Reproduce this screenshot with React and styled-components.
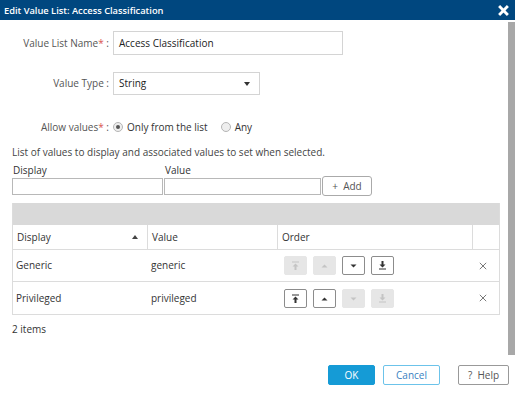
import React from 'react';
import styled, { createGlobalStyle } from 'styled-components';

const GlobalStyle = createGlobalStyle`
  html, body {
    margin: 0;
    padding: 0;
    background: #fff;
  }
  body {
    font-family: 'Open Sans', 'Liberation Sans', sans-serif;
    font-size: 10px;
    line-height: 13px;
    color: #333;
  }
`;

const Dialog = styled.div`
  width: 515px;
  height: 393px;
  display: flex;
  flex-direction: column;
  overflow: hidden;
  background: #fff;
`;

const TitleBar = styled.div`
  height: 20px;
  flex: none;
  background: #00477f;
  color: #fff;
  display: flex;
  align-items: center;
  justify-content: space-between;
  padding: 0 6px 0 4px;
  font-size: 9.3px;
  font-weight: 600;
`;

const ScrollArea = styled.div`
  height: 335px;
  flex: none;
  display: flex;
`;

const Content = styled.div`
  flex: 1;
  padding: 11px 8px 0 12px;
  display: flex;
  flex-direction: column;
`;

const ScrollTrack = styled.div`
  width: 7px;
  flex: none;
  margin-right: 2px;
  padding-top: 2px;
  display: flex;
`;

const ScrollThumb = styled.div`
  flex: 1;
  background: #a8a8a8;
`;

const FormRow = styled.div`
  display: grid;
  grid-template-columns: 97px auto;
  column-gap: 4px;
  align-items: center;
  margin-top: ${(p) => p.top || 0}px;
`;

const Label = styled.div`
  text-align: right;
  color: #555;
  white-space: nowrap;
`;

const Req = styled.span`
  color: #d9534f;
`;

const TextBox = styled.div`
  box-sizing: border-box;
  width: ${(p) => p.w}px;
  height: ${(p) => p.h || 24}px;
  border: 1px solid #d4d4d4;
  display: flex;
  align-items: center;
  padding: 0 9px 0 5px;
  justify-content: space-between;
  color: #222;
`;

const Caret = styled.span`
  width: 0;
  height: 0;
  border-left: 3px solid transparent;
  border-right: 3px solid transparent;
  border-top: 4px solid #333;
`;

const RadioGroup = styled.div`
  display: flex;
  align-items: center;
  height: 14px;
`;

const RadioOption = styled.label`
  display: flex;
  align-items: center;
  gap: 4px;
  margin-right: 13px;
  color: #333;
`;

const RadioDot = styled.span`
  box-sizing: border-box;
  width: 10px;
  height: 10px;
  border-radius: 50%;
  border: 1px solid #b5b5b5;
  background: #eee;
  display: flex;
  align-items: center;
  justify-content: center;
  &::after {
    content: '';
    width: 4px;
    height: 4px;
    border-radius: 50%;
    background: ${(p) => (p.checked ? '#555' : 'transparent')};
  }
`;

const Hint = styled.div`
  margin-top: 12px;
  color: #444;
`;

const EntryGrid = styled.div`
  display: grid;
  grid-template-columns: 152px 158px auto;
  margin-top: 5px;
  align-items: end;
`;

const EntryLabel = styled.div`
  color: #333;
  padding-left: 1px;
`;

const EntryInput = styled.div`
  box-sizing: border-box;
  width: ${(p) => p.w}px;
  height: 17px;
  border: 1px solid #b8b8b8;
  margin-top: 1px;
`;

const AddButton = styled.button`
  box-sizing: border-box;
  width: 50px;
  height: 20px;
  margin-bottom: -1px;
  border: 1px solid #aaa;
  border-radius: 3px;
  background: #fff;
  color: #555;
  font-family: inherit;
  font-size: 10px;
  padding: 0;
  white-space: pre;
`;

const Table = styled.div`
  margin-top: 8px;
  width: 486px;
  border: 1px solid #dcdcdc;
  border-top: none;
`;

const TableBand = styled.div`
  height: 22px;
  background: #d9d9d9;
`;

const Row = styled.div`
  display: grid;
  grid-template-columns: 135px 130px 195px 1fr;
  height: ${(p) => p.h}px;
  border-bottom: ${(p) => (p.last ? 'none' : '1px solid #dcdcdc')};
  box-sizing: border-box;
`;

const HeadCell = styled.div`
  display: flex;
  align-items: center;
  justify-content: space-between;
  padding: 0 9px 0 4px;
  color: #333;
  border-right: ${(p) => (p.end ? 'none' : '1px solid #dcdcdc')};
`;

const Cell = styled.div`
  display: flex;
  align-items: center;
  padding-left: ${(p) => p.pl ?? 3}px;
  gap: 6px;
  color: #333;
`;

const SortUp = styled.span`
  width: 0;
  height: 0;
  border-left: 3px solid transparent;
  border-right: 3px solid transparent;
  border-bottom: 4px solid #444;
`;

const OrderBtn = styled.div`
  box-sizing: border-box;
  width: 23px;
  height: 19px;
  border-radius: 2px;
  display: flex;
  align-items: center;
  justify-content: center;
  border: 1px solid ${(p) => (p.off ? '#e6e6e6' : '#8c8c8c')};
  background: ${(p) => (p.off ? '#e6e6e6' : '#fff')};
  color: ${(p) => (p.off ? '#c4c4c4' : '#333')};
`;

const Count = styled.div`
  margin-top: 8px;
  color: #333;
`;

const Footer = styled.div`
  flex: 1;
  display: flex;
  align-items: flex-start;
  padding: 10px 6px 0 0;
  justify-content: flex-end;
`;

const FootButton = styled.button`
  box-sizing: border-box;
  width: ${(p) => p.w}px;
  height: 20px;
  margin-left: ${(p) => p.ml}px;
  border-radius: 2px;
  font-family: inherit;
  font-size: 10px;
  padding: 0;
  white-space: pre;
  background: ${(p) => (p.primary ? '#159bd6' : '#fff')};
  color: ${(p) => (p.primary ? '#fff' : p.color)};
  border: 1px solid ${(p) => (p.primary ? '#159bd6' : p.border)};
`;

const Glyph = ({ kind }) => {
  const paths = {
    top: (
      <>
        <rect x="1" y="0.5" width="7" height="1" fill="currentColor" />
        <path d="M4.5 2.5 L1.5 5.5 H3.5 V9 H5.5 V5.5 H7.5 Z" fill="currentColor" />
      </>
    ),
    up: <path d="M4.5 3.5 L1.5 6.5 H7.5 Z" fill="currentColor" />,
    down: <path d="M1.5 3.5 H7.5 L4.5 6.5 Z" fill="currentColor" />,
    bottom: (
      <>
        <path d="M3.5 0 H5.5 V3.5 H7.5 L4.5 6.5 L1.5 3.5 H3.5 Z" fill="currentColor" />
        <rect x="1" y="7.5" width="7" height="1" fill="currentColor" />
      </>
    ),
  };
  return (
    <svg width="9" height="9" viewBox="0 0 9 9">
      {paths[kind]}
    </svg>
  );
};

const Close = ({ size, color, width }) => (
  <svg width={size} height={size} viewBox="0 0 10 10">
    <path d="M1 1 L9 9 M9 1 L1 9" stroke={color} strokeWidth={width} />
  </svg>
);

const rows = [
  { display: 'Generic', value: 'generic', off: [true, true, false, false] },
  { display: 'Privileged', value: 'privileged', off: [false, false, true, true] },
];

const kinds = ['top', 'up', 'down', 'bottom'];

function App() {
  return (
    <Dialog>
      <GlobalStyle />
      <TitleBar>
        <span>Edit Value List: Access Classification</span>
        <Close size={11} color="#fff" width={2.6} />
      </TitleBar>
      <ScrollArea>
        <Content>
          <FormRow>
            <Label>
              Value List Name<Req>*</Req> :
            </Label>
            <TextBox w={230}>Access Classification</TextBox>
          </FormRow>
          <FormRow top={17}>
            <Label>Value Type :</Label>
            <TextBox w={147} h={23}>
              String
              <Caret />
            </TextBox>
          </FormRow>
          <FormRow top={25}>
            <Label>
              Allow values<Req>*</Req> :
            </Label>
            <RadioGroup>
              <RadioOption>
                <RadioDot checked />
                Only from the list
              </RadioOption>
              <RadioOption>
                <RadioDot />
                Any
              </RadioOption>
            </RadioGroup>
          </FormRow>
          <Hint>List of values to display and associated values to set when selected.</Hint>
          <EntryGrid>
            <div>
              <EntryLabel>Display</EntryLabel>
              <EntryInput w={151} />
            </div>
            <div>
              <EntryLabel>Value</EntryLabel>
              <EntryInput w={157} />
            </div>
            <AddButton>{'+  Add'}</AddButton>
          </EntryGrid>
          <Table>
            <TableBand />
            <Row h={25}>
              <HeadCell>
                Display
                <SortUp />
              </HeadCell>
              <HeadCell>Value</HeadCell>
              <HeadCell>Order</HeadCell>
              <HeadCell end />
            </Row>
            {rows.map((r, i) => (
              <Row key={r.display} h={32} last={i === rows.length - 1}>
                <Cell>{r.display}</Cell>
                <Cell>{r.value}</Cell>
                <Cell pl={6}>
                  {kinds.map((k, j) => (
                    <OrderBtn key={k} off={r.off[j]}>
                      <Glyph kind={k} />
                    </OrderBtn>
                  ))}
                </Cell>
                <Cell pl={6}>
                  <Close size={8} color="#666" width={1.1} />
                </Cell>
              </Row>
            ))}
          </Table>
          <Count>2 items</Count>
        </Content>
        <ScrollTrack>
          <ScrollThumb />
        </ScrollTrack>
      </ScrollArea>
      <Footer>
        <FootButton primary w={47} ml={0}>
          OK
        </FootButton>
        <FootButton w={57} ml={8} color="#3a7fc1" border="#6cc3ea">
          Cancel
        </FootButton>
        <FootButton w={51} ml={18} color="#555" border="#999">
          {'?  Help'}
        </FootButton>
      </Footer>
    </Dialog>
  );
}

export default App;
